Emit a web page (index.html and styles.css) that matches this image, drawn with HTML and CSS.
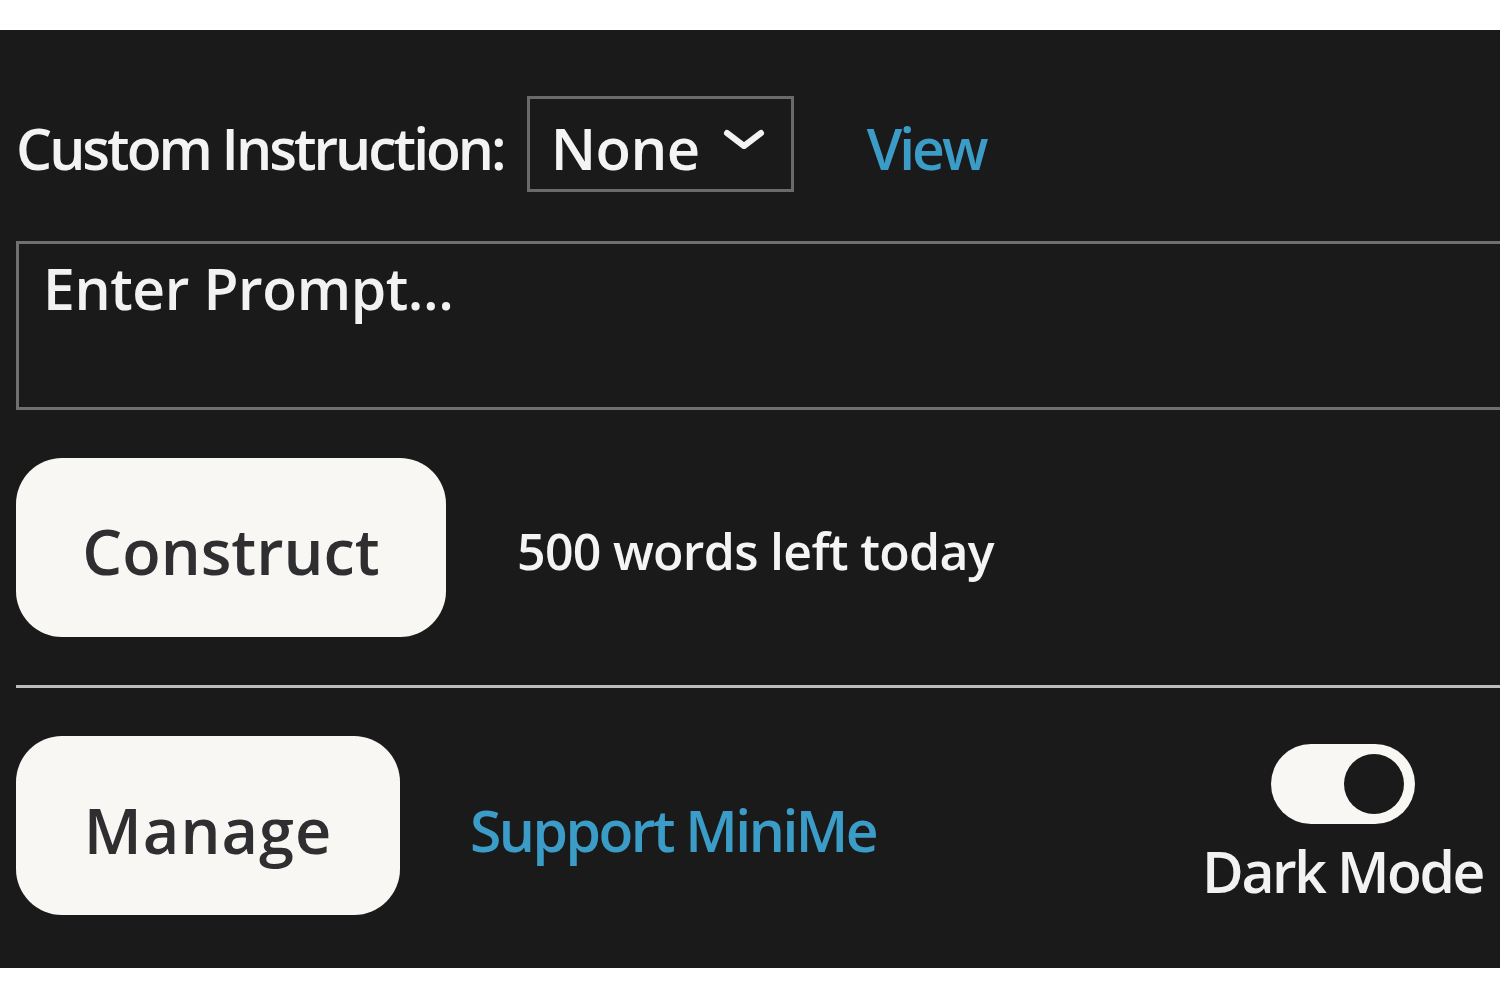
FILE: index.html
```html
<!DOCTYPE html>
<html>
<head>
<meta charset="utf-8">
<link rel="stylesheet" href="styles.css">
</head>
<body>
<div class="top-strip"></div>
<main class="panel">
  <div class="row instr-row">
    <span class="label">Custom Instruction:</span>
    <div class="select">
      <span class="select-text">None</span>
      <svg class="chevron" viewBox="0 0 44 24" width="44" height="24"><path d="M5 5 L22 18 L39 5" fill="none" stroke="#f2f2f2" stroke-width="6" stroke-linecap="round" stroke-linejoin="round"/></svg>
    </div>
    <a class="link view">View</a>
  </div>
  <div class="prompt"><span class="placeholder">Enter Prompt...</span></div>
  <div class="row action-row">
    <button class="btn construct">Construct</button>
    <span class="words">500 words left today</span>
  </div>
  <hr class="divider">
  <div class="row footer-row">
    <div class="footer-left">
      <button class="btn manage">Manage</button>
      <a class="link support">Support MiniMe</a>
    </div>
    <div class="mode">
      <div class="toggle"><span class="knob"></span></div>
      <span class="mode-label">Dark Mode</span>
    </div>
  </div>
</main>
<div class="bottom-strip"></div>
</body>
</html>
```
FILE: styles.css
```css
html, body {
  margin: 0;
  padding: 0;
  background: #ffffff;
  overflow: hidden;
}
body {
  font-family: "Open Sans", "Noto Sans", sans-serif;
  font-weight: 600;
  width: 1500px;
  height: 1000px;
}
.top-strip { height: 30px; background: #ffffff; }
.bottom-strip { height: 32px; background: #ffffff; }
.panel {
  background: #1a1a1a;
  height: 938px;
  box-sizing: border-box;
  padding: 66px 0 0 16px;
  overflow: hidden;
  color: #f4f4f4;
}
.row { display: flex; align-items: center; }
.instr-row { height: 96px; }
.label {
  font-size: 57px;
  letter-spacing: -3px;
  color: #f3f3f3;
  margin-top: 8px;
}
.select {
  margin-left: 23px;
  width: 267px;
  height: 96px;
  box-sizing: border-box;
  border: 3px solid #6a6a6a;
  display: flex;
  align-items: center;
  padding-left: 21px;
}
.select-text {
  font-size: 58px;
  letter-spacing: -0.5px;
  color: #f4f4f4;
  margin-top: 6px;
}
.chevron { margin-left: 22px; margin-top: -8px; }
.link { color: #3b9cc8; text-decoration: none; }
.view {
  margin-left: 73px;
  font-size: 57px;
  letter-spacing: -3px;
  margin-top: 8px;
}
.prompt {
  margin-top: 49px;
  width: 1520px;
  height: 169px;
  box-sizing: border-box;
  border: 3px solid #707070;
  padding: 8px 0 0 24px;
}
.placeholder {
  font-size: 57px;
  letter-spacing: -0.4px;
  color: #f2f2f2;
  line-height: 72px;
}
.action-row { margin-top: 48px; }
.btn {
  background: #f8f7f3;
  border: none;
  border-radius: 46px;
  color: #2f2f31;
  font-family: "Open Sans", "Noto Sans", sans-serif;
  font-weight: 600;
  font-size: 63px;
  height: 179px;
  padding: 0;
}
.construct { width: 430px; padding-top: 6px; letter-spacing: 0; }
.manage { width: 384px; padding-top: 8px; letter-spacing: 1px; }
.words {
  margin-left: 71px;
  font-size: 50px;
  letter-spacing: -0.7px;
  color: #f4f4f4;
  margin-top: 6px;
}
.divider {
  margin: 48px 0 0 0;
  width: 1520px;
  height: 3px;
  border: none;
  background: #bdbdbd;
}
.footer-row {
  margin-top: 48px;
  justify-content: space-between;
  padding-right: 17px;
}
.footer-left { display: flex; align-items: center; }
.support {
  margin-left: 70px;
  font-size: 57px;
  letter-spacing: -2.5px;
  margin-top: 8px;
}
.mode {
  display: flex;
  flex-direction: column;
  align-items: center;
  padding-top: 2px;
}
.toggle {
  width: 144px;
  height: 80px;
  border-radius: 40px;
  background: #f8f7f3;
  display: flex;
  align-items: center;
  justify-content: flex-end;
  padding-right: 11px;
  box-sizing: border-box;
}
.knob {
  width: 60px;
  height: 60px;
  border-radius: 50%;
  background: #1a1a1a;
}
.mode-label {
  margin-top: 8px;
  font-size: 57px;
  letter-spacing: -2.4px;
  color: #f2f2f2;
}
```
